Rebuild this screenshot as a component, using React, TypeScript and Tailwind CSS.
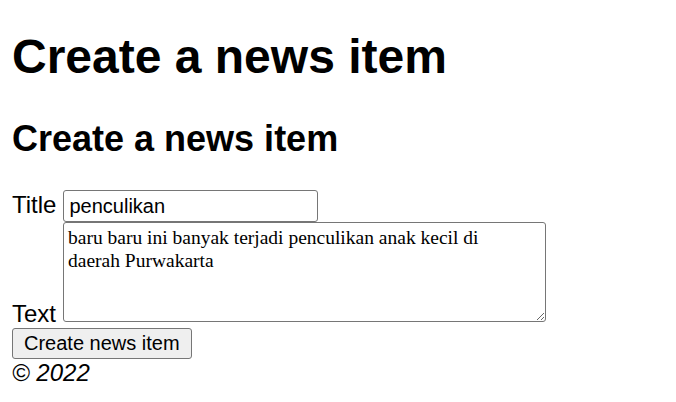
export default function App() {
  return (
    <div className="min-h-screen bg-white px-3 pt-[29px] font-['Liberation_Sans',Arial,sans-serif] text-[24px] leading-[1.15] text-black">
      <h1 className="text-[48px] font-bold leading-[55px]">Create a news item</h1>
      <h2 className="mt-[34px] text-[36px] font-bold leading-[41px]">Create a news item</h2>

      <form className="mt-[31px]" onSubmit={(e) => e.preventDefault()}>
        {/* Title row */}
        <div>
          <label htmlFor="title" className="mr-[7px]">Title</label>
          <input
            id="title"
            type="text"
            defaultValue="penculikan"
            className="h-[32px] w-[255px] rounded-[3px] border border-[#767676] bg-white px-[5px] py-[3.5px] align-baseline text-[20px] leading-[23px]"
          />
        </div>

        {/* Text row */}
        <div>
          <label htmlFor="text" className="mr-[7px]">Text</label>
          <textarea
            id="text"
            defaultValue="baru baru ini banyak terjadi penculikan anak kecil di daerah Purwakarta"
            className="h-[100px] w-[483px] resize rounded-[3px] border border-[#767676] bg-white py-[3px] pl-[4px] pr-[20px] align-baseline font-['Liberation_Serif',Georgia,serif] text-[19.5px] leading-[23.3px]"
          />
        </div>

        <button
          type="submit"
          className="block h-[31px] rounded-[3px] border border-[#767676] bg-[#efefef] px-[11px] text-[20px] leading-[23px]"
        >
          Create news item
        </button>
      </form>

      <p className="italic">© 2022</p>
    </div>
  );
}
